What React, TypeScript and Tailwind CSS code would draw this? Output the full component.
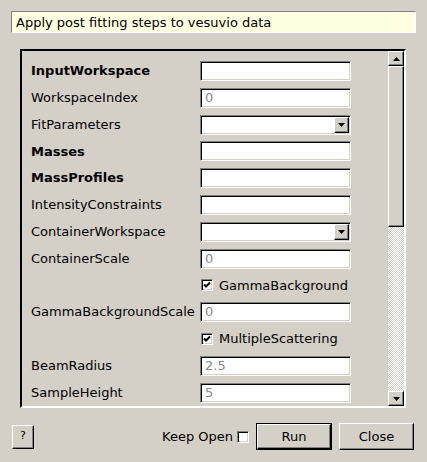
import React from "react";

type Row =
  | { kind: "text"; label: string; bold?: boolean; value?: string }
  | { kind: "combo"; label: string; bold?: boolean }
  | { kind: "check"; label: string; checked: boolean };

const rows: Row[] = [
  { kind: "text", label: "InputWorkspace", bold: true },
  { kind: "text", label: "WorkspaceIndex", value: "0" },
  { kind: "combo", label: "FitParameters" },
  { kind: "text", label: "Masses", bold: true },
  { kind: "text", label: "MassProfiles", bold: true },
  { kind: "text", label: "IntensityConstraints" },
  { kind: "combo", label: "ContainerWorkspace" },
  { kind: "text", label: "ContainerScale", value: "0" },
  { kind: "check", label: "GammaBackground", checked: true },
  { kind: "text", label: "GammaBackgroundScale", value: "0" },
  { kind: "check", label: "MultipleScattering", checked: true },
  { kind: "text", label: "BeamRadius", value: "2.5" },
  { kind: "text", label: "SampleHeight", value: "5" },
];

const sunken =
  "border border-t-[#808080] border-l-[#808080] border-b-white border-r-white shadow-[inset_1px_1px_0_#000,inset_-1px_-1px_0_#d4d0c8]";
const raised =
  "border border-t-white border-l-white border-b-black border-r-black shadow-[inset_-1px_-1px_0_#808080]";

function CheckBox({ checked }: { checked: boolean }) {
  return (
    <div className={`w-[12px] h-[12px] bg-white flex items-center justify-center ${sunken}`}>
      {checked && (
        <svg width="8" height="8" viewBox="0 0 8 8">
          <path d="M1 3.5 L3 5.5 L7 1.5" stroke="#000" strokeWidth="2" fill="none" />
        </svg>
      )}
    </div>
  );
}

function Arrow({ up }: { up?: boolean }) {
  return (
    <svg width="7" height="4" viewBox="0 0 7 4">
      <path d={up ? "M0 4 L3.5 0 L7 4 Z" : "M0 0 L7 0 L3.5 4 Z"} fill="#000" />
    </svg>
  );
}

export default function App() {
  return (
    <div className="w-[427px] h-[462px] bg-[#d4d0c8] flex flex-col font-['DejaVu_Sans',sans-serif] text-[13px] text-black overflow-hidden">
      <div className="pt-[11px] pl-[11px]">
        <div className="w-[405px] h-[22px] bg-[#ffffe1] border border-t-[#808080] border-l-[#808080] border-b-white border-r-white flex items-center pl-[4px] pt-[1px] leading-none">
          Apply post fitting steps to vesuvio data
        </div>
      </div>

      <div className="mt-[16px] ml-[20px] w-[386px] h-[359px] flex border-2 border-t-black border-l-black border-b-white border-r-white">
        <div className="flex-1 flex flex-col gap-[6.8px] pt-[10px] pl-[9px] overflow-hidden">
          {rows.map((row, i) => (
            <div key={i} className="flex items-center h-[20px] shrink-0">
              <div
                className={`w-[169px] shrink-0 ${
                  row.kind !== "check" && row.bold ? "font-bold" : ""
                }`}
              >
                {row.kind === "check" ? "" : row.label}
              </div>
              {row.kind === "text" && (
                <div className={`w-[151px] h-[20px] bg-white flex items-center pl-[4px] text-[#8a8a8a] ${sunken}`}>
                  {row.value ?? ""}
                </div>
              )}
              {row.kind === "combo" && (
                <div className={`w-[151px] h-[20px] bg-white flex justify-end p-[1px] ${sunken}`}>
                  <div className={`w-[15px] h-full bg-[#d4d0c8] flex items-center justify-center ${raised}`}>
                    <Arrow />
                  </div>
                </div>
              )}
              {row.kind === "check" && (
                <div className="flex items-center gap-[6px] pl-[1px]">
                  <CheckBox checked={row.checked} />
                  <span>{row.label}</span>
                </div>
              )}
            </div>
          ))}
        </div>

        <div className="w-[16px] flex flex-col">
          <div className={`h-[15px] bg-[#d4d0c8] flex items-center justify-center ${raised}`}>
            <Arrow up />
          </div>
          <div className={`h-[161px] bg-[#d4d0c8] ${raised}`} />
          <div className="flex-1 bg-[repeating-conic-gradient(#ffffff_0_25%,#d4d0c8_0_50%)] bg-[length:2px_2px]" />
          <div className={`h-[15px] bg-[#d4d0c8] flex items-center justify-center ${raised}`}>
            <Arrow />
          </div>
        </div>
      </div>

      <div className="mt-[15px] flex items-center pl-[12px] pr-[13px] h-[27px]">
        <button className={`w-[22px] h-[24px] bg-[#d4d0c8] text-[11px] flex items-center justify-center ${raised}`}>
          ?
        </button>
        <div className="flex-1" />
        <span>Keep Open</span>
        <div className="ml-[4px]">
          <CheckBox checked={false} />
        </div>
        <button className="ml-[7px] w-[76px] h-[27px] border border-black p-0 bg-[#d4d0c8]">
          <div className={`w-full h-full flex items-center justify-center ${raised}`}>Run</div>
        </button>
        <button className={`ml-[7px] w-[75px] h-[27px] bg-[#d4d0c8] flex items-center justify-center ${raised}`}>
          Close
        </button>
      </div>
    </div>
  );
}
